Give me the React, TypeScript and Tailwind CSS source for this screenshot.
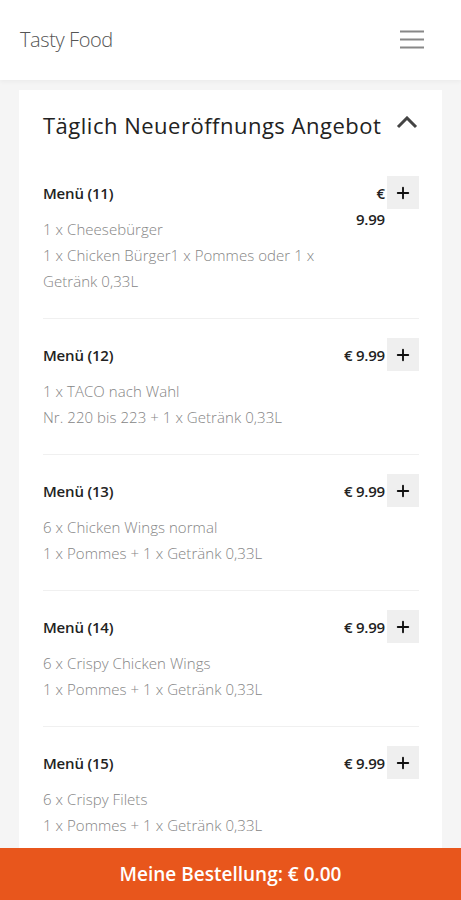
import { Plus } from "lucide-react";

type Item = { name: string; lines: string[]; price: string };

const items: Item[] = [
  {
    name: "Menü (11)",
    lines: ["1 x Cheesebürger", "1 x Chicken Bürger1 x Pommes oder 1 x Getränk 0,33L"],
    price: "€ 9.99",
  },
  { name: "Menü (12)", lines: ["1 x TACO nach Wahl", "Nr. 220 bis 223 + 1 x Getränk 0,33L"], price: "€ 9.99" },
  { name: "Menü (13)", lines: ["6 x Chicken Wings normal", "1 x Pommes + 1 x Getränk 0,33L"], price: "€ 9.99" },
  { name: "Menü (14)", lines: ["6 x Crispy Chicken Wings", "1 x Pommes + 1 x Getränk 0,33L"], price: "€ 9.99" },
  { name: "Menü (15)", lines: ["6 x Crispy Filets", "1 x Pommes + 1 x Getränk 0,33L"], price: "€ 9.99" },
];

function MenuItem({ item, last }: { item: Item; last: boolean }) {
  return (
    <div className={`pt-[23px] pb-[24px] ${last ? "" : "border-b border-[#f0f0f0]"}`}>
      <div className="flex items-start">
        <div className="min-w-0 flex-auto">
          <h3 className="text-[15px] font-semibold leading-[26px] tracking-[-0.2px] text-[#222]">{item.name}</h3>
          <div className="mt-[10px] text-[15px] font-light leading-[26px] tracking-[0.05px] text-[#858585]">
            {item.lines.map((l) => (
              <p key={l}>{l}</p>
            ))}
          </div>
        </div>
        <span className="shrink text-right text-[15px] font-semibold leading-[26px] tracking-[-0.2px] text-[#222]">
          {item.price}
        </span>
        <button className="ml-[2px] mt-[-4px] flex h-[33px] w-[32px] shrink-0 items-center justify-center bg-[#efefef] text-[#111]">
          <Plus size={18} strokeWidth={2.5} />
        </button>
      </div>
    </div>
  );
}

export default function App() {
  return (
    <div
      className="relative h-[900px] w-[461px] overflow-hidden bg-[#f5f5f5]"
      style={{ fontFamily: '"Open Sans", "Noto Sans", sans-serif' }}
    >
      <header className="flex h-[80px] items-center justify-between bg-white pl-5 pr-[37px] shadow-[0_2px_4px_rgba(0,0,0,0.04)]">
        <span className="text-[20px] font-light tracking-[-0.4px] text-[#555]">Tasty Food</span>
        <svg width="24" height="20" viewBox="0 0 24 20" className="text-[#888]">
          <path d="M0 1.5h24M0 9.5h24M0 17.5h24" stroke="currentColor" strokeWidth="2" />
        </svg>
      </header>

      <main className="px-[19px] pt-[10px]">
        <section className="bg-white">
          <div className="flex items-center justify-between pl-6 pr-[24px] pt-[21px] pb-[18px]">
            <h2 className="text-[22px] leading-7 tracking-[0.5px] text-[#222]">Täglich Neueröffnungs Angebot</h2>
            <svg width="22" height="13" viewBox="0 0 22 13" className="mt-[-6px] text-[#444]">
              <path d="M2 11l9-9 9 9" fill="none" stroke="currentColor" strokeWidth="3" />
            </svg>
          </div>
          <div className="pl-6 pr-[23px]">
            {items.map((it, i) => (
              <MenuItem key={it.name} item={it} last={i === items.length - 1} />
            ))}
          </div>
        </section>
      </main>

      <div className="fixed bottom-0 left-0 flex h-[52px] w-[461px] items-center justify-center bg-[#e8561c]">
        <span className="text-[19px] font-semibold text-white">Meine Bestellung: € 0.00</span>
      </div>
    </div>
  );
}
